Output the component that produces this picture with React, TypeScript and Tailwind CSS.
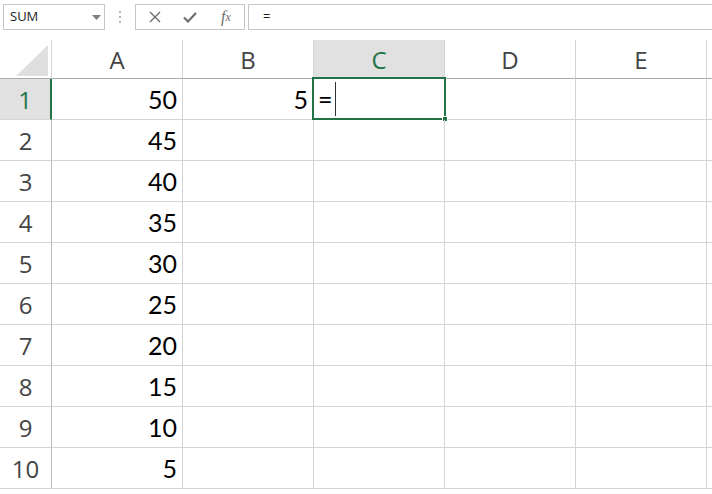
import React from 'react';

const cols = ['A', 'B', 'C', 'D', 'E'];
const values = [50, 45, 40, 35, 30, 25, 20, 15, 10, 5];

const hdrFont = { fontFamily: '"Open Sans", "Noto Sans", sans-serif' };
const cellFont = { fontFamily: 'Lato, "Liberation Sans", sans-serif' };

const Toolbar: React.FC = () => (
  <div className="flex h-[40px] items-start pt-[4px] pl-[3px]" style={hdrFont}>
    {/* name box */}
    <div className="relative flex h-[26px] w-[102px] items-center border border-[#c6c6c6] bg-white pl-[6px] text-[13px] text-[#222]">
      SUM
      <svg className="absolute left-[88px] top-[10px]" width="9" height="5" viewBox="0 0 9 5">
        <polygon points="0,0 9,0 4.5,5" fill="#7f7f7f" />
      </svg>
    </div>
    {/* grip */}
    <div className="flex h-[26px] w-[30px] flex-col items-center justify-center gap-[3px]">
      <span className="h-[2px] w-[2px] bg-[#b5b5b5]" />
      <span className="h-[2px] w-[2px] bg-[#b5b5b5]" />
      <span className="h-[2px] w-[2px] bg-[#b5b5b5]" />
    </div>
    {/* cancel / enter / fx */}
    <div className="flex h-[26px] w-[110px] items-center border border-[#c6c6c6] bg-white">
      <div className="flex w-[36px] justify-center pl-[2px]">
        <svg width="12" height="12" viewBox="0 0 12 12">
          <path d="M1 1 L11 11 M11 1 L1 11" stroke="#6d6d6d" strokeWidth="1.4" fill="none" />
        </svg>
      </div>
      <div className="flex w-[36px] justify-center">
        <svg width="14" height="11" viewBox="0 0 14 11">
          <path d="M1 5.5 L5 9.5 L13 1" stroke="#6d6d6d" strokeWidth="2.2" fill="none" />
        </svg>
      </div>
      <div
        className="flex w-[36px] justify-center text-[16px] italic text-[#6d6d6d]"
        style={{ fontFamily: '"Liberation Serif", serif' }}
      >
        f<span className="mt-[3px] text-[12px]">x</span>
      </div>
    </div>
    {/* formula input */}
    <div className="ml-[3px] flex h-[26px] flex-1 items-center border border-r-0 border-[#c6c6c6] bg-white pl-[14px] text-[13px] text-[#222]">
      =
    </div>
  </div>
);

const Corner: React.FC = () => (
  <div className="relative h-[39px] w-[52px] shrink-0 border-b border-r border-b-[#ababab] border-r-[#d4d4d4] bg-white">
    <svg className="absolute left-[16px] top-[5px]" width="32" height="31" viewBox="0 0 32 31">
      <polygon points="0,31 32,31 32,0" fill="#dfdfdf" />
    </svg>
  </div>
);

export default function App() {
  return (
    <div className="h-[494px] w-[712px] overflow-hidden bg-white">
      <Toolbar />
      {/* column headers */}
      <div className="flex">
        <Corner />
        {cols.map((c) => (
          <div
            key={c}
            className={
              c === 'C'
                ? 'flex h-[39px] w-[131px] shrink-0 items-center justify-center border-b border-r border-b-[#ababab] border-r-[#d4d4d4] bg-[#e1e1e1] pt-[2px] text-[24px] text-[#217346]'
                : 'flex h-[39px] w-[131px] shrink-0 items-center justify-center border-b border-r border-b-[#ababab] border-r-[#d4d4d4] bg-white pt-[2px] text-[24px] text-[#444]'
            }
            style={hdrFont}
          >
            {c}
          </div>
        ))}
        <div className="h-[39px] flex-1 border-b border-[#ababab]" />
      </div>
      {/* rows */}
      {values.map((v, i) => (
        <div key={i} className="flex">
          <div
            className={
              i === 0
                ? 'flex h-[41px] w-[52px] shrink-0 items-center justify-center border-b border-r-2 border-b-[#d4d4d4] border-r-[#217346] bg-[#e1e1e1] pt-[1px] text-[24px] text-[#217346]'
                : 'flex h-[41px] w-[52px] shrink-0 items-center justify-center border-b border-r border-b-[#d4d4d4] border-r-[#bdbdbd] bg-white pt-[1px] text-[24px] text-[#444]'
            }
            style={hdrFont}
          >
            {i + 1}
          </div>
          <div
            className="flex h-[41px] w-[131px] shrink-0 items-center justify-end border-b border-r border-[#d4d4d4] pr-[5px] pt-[2px] text-[25px] text-black"
            style={cellFont}
          >
            {v}
          </div>
          <div
            className="flex h-[41px] w-[131px] shrink-0 items-center justify-end border-b border-r border-[#d4d4d4] pr-[5px] pt-[2px] text-[25px] text-black"
            style={cellFont}
          >
            {i === 0 ? 5 : ''}
          </div>
          <div
            className="relative flex h-[41px] w-[131px] shrink-0 items-center border-b border-r border-[#d4d4d4] pl-[4px] pt-[2px] text-[25px] text-black"
            style={cellFont}
          >
            {i === 0 && (
              <>
                =
                <span className="ml-[2px] mt-[-2px] h-[34px] w-px bg-[#333]" />
                <div className="pointer-events-none absolute -left-[2px] -top-[2px] -right-[2px] -bottom-px border-2 border-[#217346]" />
                <div className="absolute -right-[4px] -bottom-[3px] h-[6px] w-[6px] border border-white bg-[#217346]" />
              </>
            )}
          </div>
          <div className="h-[41px] w-[131px] shrink-0 border-b border-r border-[#d4d4d4]" />
          <div className="h-[41px] w-[131px] shrink-0 border-b border-r border-[#d4d4d4]" />
          <div className="h-[41px] flex-1 border-b border-[#d4d4d4]" />
        </div>
      ))}
    </div>
  );
}
